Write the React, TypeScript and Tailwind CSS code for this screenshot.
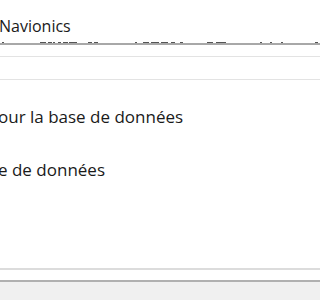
export default function App() {
  const dashes: [number, number][] = [
    [2, 2], [40, 4], [44, 2], [48, 4], [53, 2], [58, 3], [63, 5], [69, 8], [88, 4], [94, 4],
    [135, 2], [143, 6], [151, 8], [161, 7], [171, 4], [180, 3], [207, 6], [216, 10], [260, 2], [270, 2], [281, 2], [315, 3],
  ];
  return (
    <div className="w-[320px] h-[300px] bg-white overflow-hidden flex flex-col" style={{ fontFamily: '"Open Sans", "Noto Sans", sans-serif' }}>
      <div className="h-[41px] shrink-0 relative">
        <div className="pt-[15px] -ml-[1px] text-[16px] leading-[22px] text-[#1a1a1a]">Navionics</div>
      </div>
      <div className="h-[2px] shrink-0 relative">
        {dashes.map(([x, w], i) => (
          <div key={i} className="absolute top-[1px] h-[1px] bg-[#555]" style={{ left: x, width: w }} />
        ))}
      </div>
      <div className="h-[2px] shrink-0 bg-[#a8a8a8]" />
      <div className="h-[11px] shrink-0" />
      <div className="h-[1px] shrink-0 bg-[#e3e3e3]" />
      <div className="h-[22px] shrink-0" />
      <div className="h-[1px] shrink-0 bg-[#e3e3e3]" />
      <div className="flex-1 flex flex-col text-[17px] text-[#1a1a1a] -ml-[2px]">
        <div className="mt-[26px] leading-[22px]">our la base de données</div>
        <div className="mt-[31px] leading-[22px]">e de données</div>
      </div>
      <div className="h-[2px] shrink-0 bg-[#dcdcdc]" />
      <div className="h-[10px] shrink-0 bg-white" />
      <div className="h-[2px] shrink-0 bg-[#b0b0b0]" />
      <div className="h-[18px] shrink-0 bg-[#f0f0f0]" />
    </div>
  );
}
